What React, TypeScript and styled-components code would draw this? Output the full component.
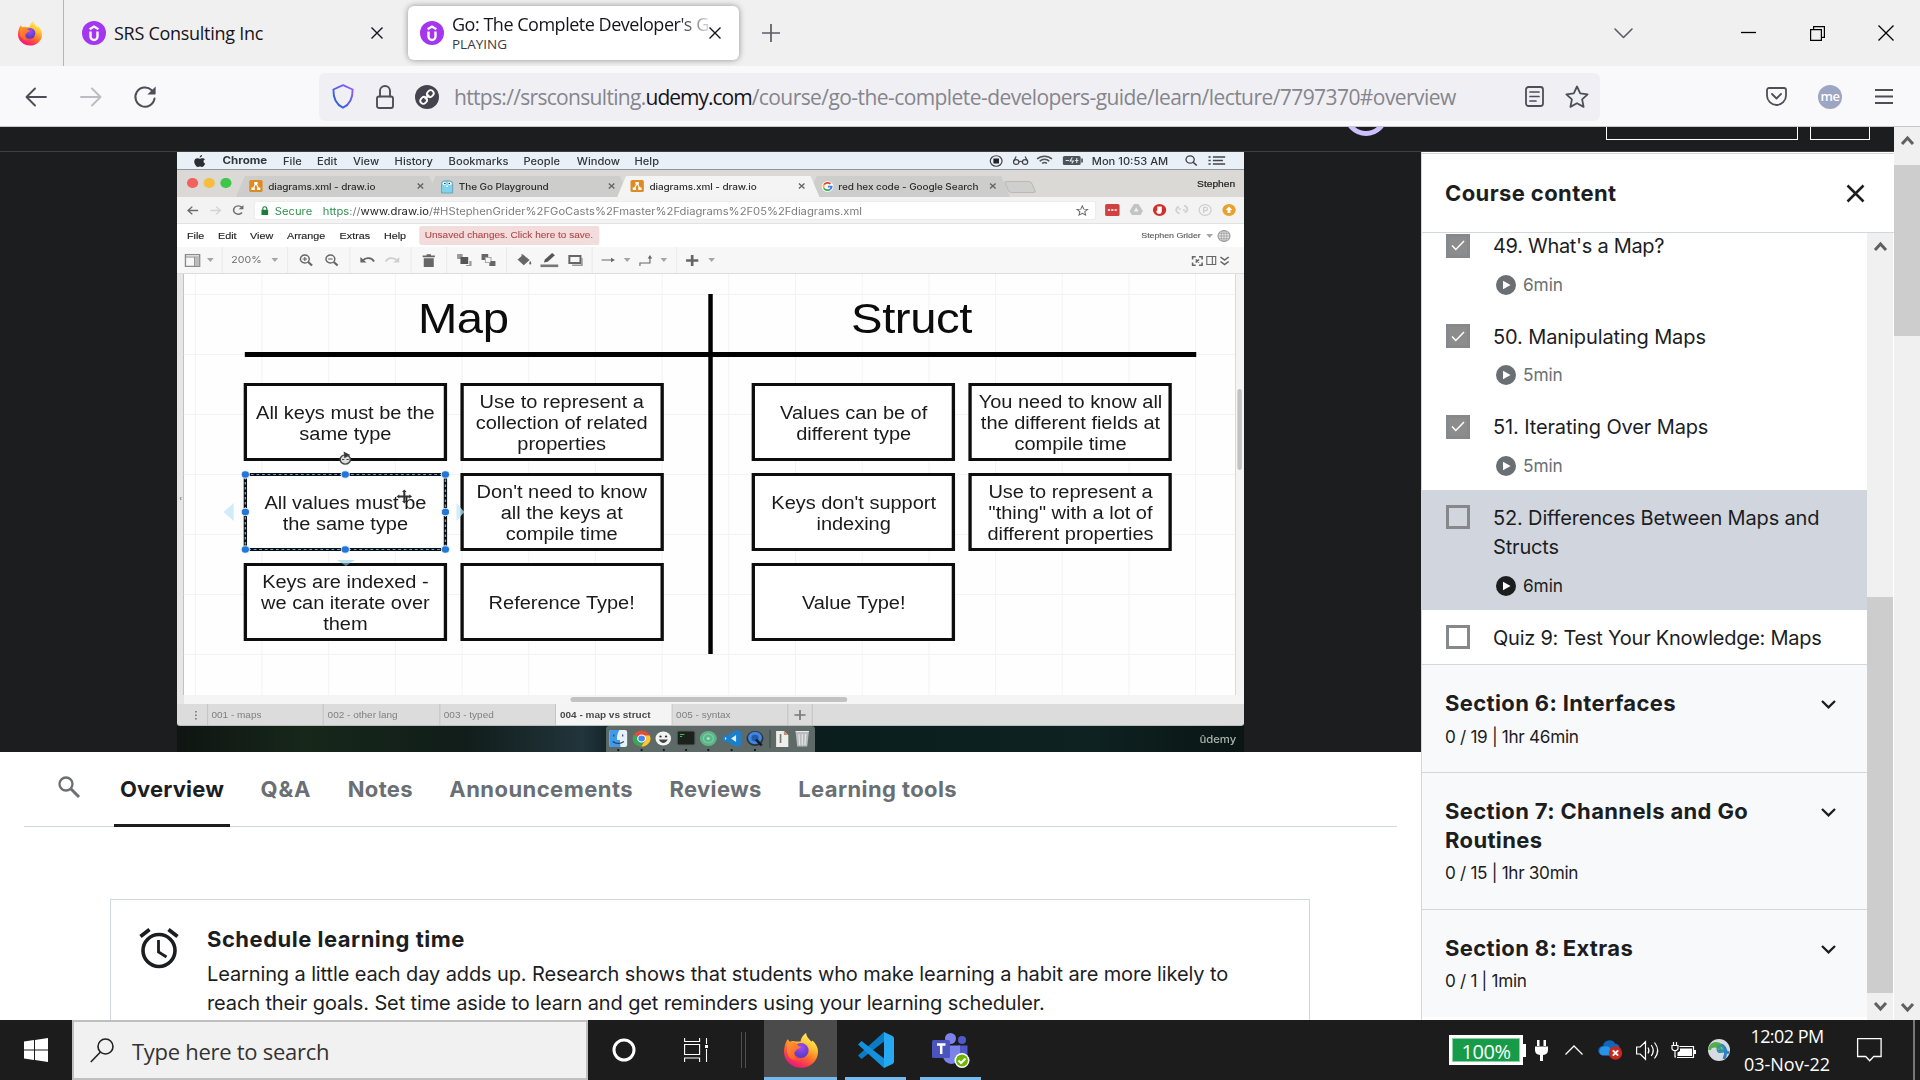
import React from 'react';
import styled, { createGlobalStyle, css } from 'styled-components';

const ui = '"Open Sans", "Noto Sans", sans-serif';
const site = 'Inter, "Liberation Sans", sans-serif';
const helv = '"Liberation Sans", Arial, sans-serif';

const GlobalStyle = createGlobalStyle`
  * { box-sizing: border-box; }
  body { margin: 0; background: #fff; overflow: hidden; }
  svg { display: block; flex: none; overflow: visible; }
`;

const Screen = styled.div`
  width: 1920px;
  height: 1080px;
  display: flex;
  flex-direction: column;
  overflow: hidden;
  font-family: ${ui};
  color: #15141a;
`;

/* ---------- Browser chrome ---------- */

const TabStrip = styled.div`
  height: 66px;
  flex: none;
  display: flex;
  align-items: stretch;
  background: #f0f0f0;
`;

const PinnedTab = styled.div`
  width: 64px;
  display: flex;
  align-items: center;
  padding-left: 18px;
  border-right: 1px solid #b5b5b8;
`;

const BrowserTab = styled.div<{ $active?: boolean }>`
  display: flex;
  align-items: center;
  width: ${p => (p.$active ? 331 : 329)}px;
  padding: 0 ${p => (p.$active ? 18 : 10)}px 0 ${p => (p.$active ? 12 : 18)}px;
  ${p =>
    p.$active &&
    css`
      height: 54px;
      margin: 6px 0 0 15px;
      border-radius: 6px;
      background: #fff;
      box-shadow: 0 0 6px rgba(0, 0, 0, 0.4);
    `}
`;

const TabLabels = styled.div`
  flex: 1;
  min-width: 0;
  margin-left: 8px;
  white-space: nowrap;
`;

const TabTitle = styled.div<{ $fade?: boolean }>`
  font-size: 18px;
  line-height: 22px;
  letter-spacing: ${p => (p.$fade ? -0.48 : -0.28)}px;
  ${p => p.$fade && 'mask-image: linear-gradient(to right, #000 88%, transparent 102%);'}
`;

const TabState = styled.div`
  font-size: 13.5px;
  line-height: 19px;
  color: #3b3a43;
`;

const NewTab = styled.div`
  display: flex;
  align-items: center;
  margin-left: 23px;
`;

const WindowButtons = styled.div`
  display: flex;
  align-items: center;
  margin-left: auto;
  padding-right: 26px;
`;

const Spacer = styled.div<{ $w: number }>`
  flex: none;
  width: ${p => p.$w}px;
`;

const NavBar = styled.div`
  height: 61px;
  flex: none;
  display: flex;
  align-items: center;
  padding: 1px 27px 0 25px;
  background: #f9f9fb;
  border-bottom: 1px solid #c8c8cc;
`;

const UrlBar = styled.div`
  display: flex;
  align-items: center;
  width: 1281px;
  height: 48px;
  margin-left: 162px;
  padding: 0 11px 0 13px;
  border-radius: 6px;
  background: #f0f0f4;
`;

const Url = styled.div`
  flex: 1;
  margin-left: 15px;
  padding-top: 1px;
  font-size: 21px;
  line-height: 28px;
  letter-spacing: -0.57px;
  color: #85858c;
  white-space: pre;
`;

const UrlOrigin = styled.span`
  letter-spacing: -0.68px;
`;

const UrlHost = styled.span`
  letter-spacing: -1.01px;
  color: #15141a;
`;

const Avatar = styled.div`
  width: 24px;
  height: 24px;
  margin-left: 31px;
  border-radius: 50%;
  background: #9ea5c2;
  color: #fff;
  font: 600 13px/22px ${ui};
  letter-spacing: -0.5px;
  text-align: center;
`;

/* ---------- Page ---------- */

const Page = styled.div`
  flex: 1;
  min-height: 0;
  display: flex;
`;

const PageBody = styled.div`
  width: 1894px;
  display: flex;
  flex-direction: column;
`;

const SiteHeader = styled.div`
  height: 25px;
  flex: none;
  display: flex;
  align-items: flex-start;
  justify-content: flex-end;
  padding-right: 24px;
  background: #1c1d1f;
  border-bottom: 1px solid #3e4143;
`;

const ProgressClip = styled.div`
  height: 9px;
  margin-right: 206px;
  overflow: hidden;
  display: flex;
  align-items: flex-end;
`;

const ProgressRing = styled.div`
  flex: none;
  width: 44px;
  height: 44px;
  border: 5px solid #cec0fc;
  border-radius: 50%;
`;

const OutlineButton = styled.div<{ $w: number }>`
  width: ${p => p.$w}px;
  height: 13px;
  margin-left: 12px;
  border: 1px solid #fff;
  border-top: 0;
`;

const Columns = styled.div`
  flex: 1;
  min-height: 0;
  display: flex;
`;

const MainColumn = styled.div`
  width: 1421px;
  display: flex;
  flex-direction: column;
  overflow: hidden;
  background: #fff;
`;

const Player = styled.div`
  height: 600px;
  flex: none;
  padding-left: 177px;
  background: #1c1d1f;
`;

/* A 16:10 recording shown in a 16:9 player, so it is stretched sideways */
const Recording = styled.div`
  width: 960px;
  height: 600px;
  display: flex;
  flex-direction: column;
  overflow: hidden;
  transform: scaleX(1.1115);
  transform-origin: 0 0;
  filter: blur(0.5px);
  font-family: ${site};
  background: #10201d;
`;

const MacMenu = styled.div`
  height: 17px;
  flex: none;
  display: flex;
  align-items: center;
  padding: 0 17px 0 15px;
  background: #e9f0f8;
  font-size: 10px;
  font-weight: 500;
  color: #33363b;
  white-space: nowrap;
`;

const MacMenuItem = styled.div<{ $w: number; $bold?: boolean }>`
  width: ${p => p.$w}px;
  ${p => p.$bold && 'font-weight: 700; font-size: 10.4px;'}
`;

const ChromeTabs = styled.div`
  height: 28px;
  flex: none;
  display: flex;
  align-items: flex-end;
  padding: 0 8px 0 9px;
  background: #dad9d6;
  border-top: 1px solid #8f9499;
`;

const Lights = styled.div`
  display: flex;
  gap: 5.5px;
  width: 44px;
  padding-bottom: 9px;
`;

const Light = styled.div<{ $c: string }>`
  width: 9.6px;
  height: 9.6px;
  border-radius: 50%;
  background: ${p => p.$c};
`;

const ChromeTab = styled.div<{ $active?: boolean }>`
  position: relative;
  z-index: ${p => (p.$active ? 2 : 1)};
  width: 182px;
  height: 21px;
  margin-right: -10.5px;
  padding: 0 13px 1px 12px;
  display: flex;
  align-items: center;
  gap: 5px;
  background: ${p => (p.$active ? '#f4f4f4' : '#cdcdcb')};
  clip-path: polygon(0 100%, 8px 0, 174px 0, 182px 100%);
  font-size: 9px;
  font-weight: 500;
  letter-spacing: -0.08px;
  color: #2d2d2d;
  white-space: nowrap;

  svg:last-child { margin-left: auto; }
`;

const GhostTab = styled.div`
  width: 25px;
  height: 12px;
  margin: 0 0 4px 7px;
  border: 1px solid #b9b9b6;
  background: #cfcfcd;
  border-radius: 3px;
  transform: skewX(22deg);
`;

const ChromeUser = styled.div`
  margin-left: auto;
  padding-bottom: 7px;
  font: 500 9.2px/12px ${helv};
  color: #222;
  -webkit-text-stroke: 0.2px #222;
`;

const ChromeNav = styled.div`
  height: 27px;
  flex: none;
  display: flex;
  align-items: center;
  padding: 0 7px 0 9px;
  background: #f3f3f3;
  border-bottom: 1px solid #e2e2e2;
`;

const ChromeField = styled.div`
  width: 758px;
  height: 19px;
  margin: 0 8px 0 9px;
  padding: 1px 6px 0 6px;
  display: flex;
  align-items: center;
  background: #fff;
  border: 1px solid #ececec;
  border-radius: 3px;
  font-size: 10.1px;
  color: #7d7d7d;
  white-space: nowrap;

  svg:last-child { margin-left: auto; }
`;

const Ink = styled.span<{ $c: string }>`
  color: ${p => p.$c};
`;

const Extensions = styled.div`
  flex: 1;
  display: flex;
  justify-content: space-between;
`;

const DrawMenu = styled.div`
  height: 23px;
  flex: none;
  display: flex;
  align-items: center;
  padding: 0 12px 0 9px;
  background: #fff;
  font: 9.7px/12px ${helv};
  color: #1f1f1f;
  -webkit-text-stroke: 0.15px #1f1f1f;
`;

const DrawMenuItem = styled.div<{ $w: number }>`
  width: ${p => p.$w}px;
`;

const Unsaved = styled.div`
  width: 162px;
  height: 19px;
  margin-left: 1.5px;
  border-radius: 2px;
  background: #f3dcdc;
  color: #b04a4a;
  -webkit-text-stroke: 0.1px #b04a4a;
  font-size: 9px;
  line-height: 18px;
  letter-spacing: 0.01px;
  text-align: center;
  white-space: nowrap;
`;

const DrawUser = styled.div`
  margin-left: auto;
  padding-top: 1px;
  display: flex;
  align-items: center;
  gap: 4.5px;
  font-size: 8px;
  letter-spacing: -0.06px;
  color: #555;
  -webkit-text-stroke: 0.1px #555;
`;

const ToolRow = styled.div`
  height: 27px;
  flex: none;
  display: flex;
  background: #f7f7f7;
  border-bottom: 1px solid #dcdcdc;
`;

const ToolGroup = styled.div<{ $w: number; $last?: boolean }>`
  width: ${p => p.$w}px;
  display: flex;
  align-items: center;
  justify-content: space-evenly;
  border-right: ${p => (p.$last ? 0 : '1px solid #ebebeb')};
  font: 9.6px/12px ${site};
  color: #6f6f6f;
`;

const ToolEnd = styled.div`
  display: flex;
  align-items: center;
  gap: 3px;
  margin-left: auto;
  padding: 1px 13px 0 0;
`;

const DrawBody = styled.div`
  height: 421px;
  flex: none;
  display: flex;
`;

const SideRail = styled.div`
  width: 6px;
  background: #e6e6e6;
  display: flex;
  align-items: center;
  font: bold 8px/8px ${helv};
  color: #8a8a8a;
  padding: 28px 0 0 2px;
`;

const Canvas = styled.div`
  position: relative;
  width: 946px;
  background-color: #fefefe;
  background-image: linear-gradient(to right, #f3f3f3 1px, transparent 1px),
    linear-gradient(to bottom, #f3f3f3 1px, transparent 1px);
  background-size: 60px 60px;
  background-position: 10px 20px;
  font-family: ${helv};
`;

const Heading = styled.div<{ $x: number }>`
  position: absolute;
  left: ${p => p.$x}px;
  top: 21px;
  width: 200px;
  font-size: 42.5px;
  line-height: 48px;
  letter-spacing: -0.4px;
  text-align: center;
  color: #0c0c0c;
`;

const Rule = styled.div<{ $x: number; $y: number; $w: number; $h: number }>`
  position: absolute;
  left: ${p => p.$x}px;
  top: ${p => p.$y}px;
  width: ${p => p.$w}px;
  height: ${p => p.$h}px;
  background: #000;
`;

const Node = styled.div<{ $x: number; $y: number }>`
  position: absolute;
  left: ${p => p.$x}px;
  top: ${p => p.$y}px;
  width: 183px;
  height: 78px;
  padding-top: 3.5px;
  display: flex;
  align-items: center;
  justify-content: center;
  border: 3px solid #0d0d0d;
  background: #fff;
  font-size: 18px;
  line-height: 21.2px;
  letter-spacing: -0.02px;
  text-align: center;
  white-space: pre-line;
  color: #1b1b1b;
`;

const Selection = styled.svg`
  position: absolute;
  left: 0;
  top: 0;
`;

const DrawScroll = styled.div`
  width: 8px;
  padding: 115px 1.5px 0 2px;
  background: #f4f4f4;
`;

const Thumb = styled.div<{ $w: number; $h: number }>`
  width: ${p => p.$w}px;
  height: ${p => p.$h}px;
  border-radius: 3px;
  background: #c2c2c2;
`;

const DrawScrollX = styled.div`
  height: 9px;
  flex: none;
  padding: 2px 0 0 353.5px;
  background: linear-gradient(to right, #e6e6e6 6px, #f5f5f5 6px);
`;

const Sheets = styled.div`
  height: 22px;
  flex: none;
  display: flex;
  align-items: stretch;
  padding-left: 6.5px;
  background: #dcdcdc;
  border-bottom: 1px solid #bdbdbd;
  border-radius: 0 0 3px 3px;
`;

const Sheet = styled.div<{ $w: number; $active?: boolean }>`
  width: ${p => p.$w}px;
  padding: 1px 0 0 3.5px;
  border-right: 1px solid #c6c6c6;
  font: ${p => (p.$active ? 'bold ' : '')}9px/21px ${helv};
  color: ${p => (p.$active ? '#4a4a4a' : '#808080')};
  background: ${p => (p.$active ? '#f4f4f4' : 'transparent')};
  display: flex;
  align-items: center;
  white-space: nowrap;
`;

const Desktop = styled.div`
  flex: 1;
  display: flex;
  align-items: flex-start;
  background: linear-gradient(to right, #0f1512 0, #17271a 12%, #101d1a 27%, #22343c 38%, #0c1c1c 42%, #0a1f1e 70%, #0e2321 85%, #0a1514 100%);
`;

const Dock = styled.div`
  width: 188px;
  height: 27px;
  margin-left: 386px;
  padding: 3.5px 5px 0 3px;
  display: flex;
  justify-content: space-between;
  background: #5d6a68;
  border-radius: 3px 3px 0 0;
`;

const DockApp = styled.div<{ $running?: boolean }>`
  display: flex;
  flex-direction: column;
  align-items: center;
  gap: 2px;

  &::after {
    content: '';
    width: 2px;
    height: 2px;
    border-radius: 50%;
    background: ${p => (p.$running ? '#0b0f0e' : 'transparent')};
  }
`;

const DockLine = styled.div`
  width: 1px;
  height: 18px;
  background: #3f4a48;
`;

const Watermark = styled.div`
  margin: 6px 7px 0 auto;
  font: 500 10.2px/14px ${site};
  color: #a9b2b1;
`;

/* ---------- Below the player ---------- */

const CourseTabs = styled.div`
  height: 75px;
  flex: none;
  display: flex;
  gap: 24.4px;
  margin: 0 24px;
  padding-left: 34px;
  border-bottom: 1px solid #d1d7dc;
`;

const SearchTab = styled.div`
  display: flex;
  align-items: center;
  width: 31.6px;
  padding-bottom: 4px;
`;

const CourseTab = styled.div<{ $ls: number; $active?: boolean }>`
  height: 75px;
  padding: 0 6px;
  font: 700 22px/74px ${site};
  letter-spacing: ${p => p.$ls}px;
  color: ${p => (p.$active ? '#1c1d1f' : '#6a6f73')};
  border-bottom: ${p => (p.$active ? '3px solid #1c1d1f' : '0')};
  white-space: nowrap;
`;

const ScheduleCard = styled.div`
  display: flex;
  align-items: flex-start;
  width: 1200px;
  height: 200px;
  flex: none;
  margin: 72px 0 0 110px;
  padding: 25px 28px;
  border: 1px solid #d1d7dc;
  font-family: ${site};
  color: #1c1d1f;

  > svg { margin-top: 3px; }
`;

const ScheduleText = styled.div`
  margin-left: 28px;
`;

const ScheduleTitle = styled.div`
  font-size: 22px;
  font-weight: 700;
  line-height: 28.8px;
  letter-spacing: 0.5px;
`;

const ScheduleCopy = styled.div`
  margin-top: 6px;
  font-size: 20px;
  line-height: 29.4px;
  letter-spacing: -0.12px;
  white-space: pre;
`;

/* ---------- Sidebar ---------- */

const Sidebar = styled.div`
  width: 473px;
  display: flex;
  flex-direction: column;
  padding-top: 1px;
  border-left: 1px solid #d1d7dc;
  background: #fff;
  font-family: ${site};
  color: #1c1d1f;
  overflow: hidden;
`;

const SidebarHead = styled.div`
  height: 80px;
  flex: none;
  display: flex;
  align-items: center;
  justify-content: space-between;
  padding: 0 30px 0 23px;
  border-top: 1px solid #d1d7dc;
  border-bottom: 1px solid #d1d7dc;
  font-size: 22px;
  font-weight: 700;
  letter-spacing: 0.4px;
`;

const SidebarScroll = styled.div`
  flex: 1;
  min-height: 0;
  display: flex;
`;

const LectureList = styled.div`
  width: 445px;
  overflow: hidden;

  > div:first-child { margin-top: -14.4px; }
`;

const Lecture = styled.div<{ $current?: boolean }>`
  display: flex;
  gap: 23px;
  padding: 13.4px 24px 0;
  background: ${p => (p.$current ? '#d1d5dd' : '#fff')};
`;

const CheckBox = styled.div<{ $done?: boolean }>`
  width: 24px;
  height: 24px;
  flex: none;
  margin-top: 1.5px;
  display: flex;
  align-items: center;
  justify-content: center;
  border: 3px solid #86898c;
  background: ${p => (p.$done ? '#8c8c8c' : 'transparent')};
`;

const LectureTitle = styled.div<{ $ls?: number }>`
  font-size: 20px;
  line-height: 29.4px;
  letter-spacing: ${p => p.$ls ?? -0.16}px;
  white-space: pre-line;
`;

const LectureMeta = styled.div<{ $current?: boolean }>`
  height: 20px;
  margin: 13.3px 0 14.5px 3px;
  display: flex;
  align-items: center;
  gap: 7px;
  font-size: 17.3px;
  line-height: 20px;
  letter-spacing: -0.1px;
  color: ${p => (p.$current ? '#1c1d1f' : '#6a6f73')};
`;

const QuizGap = styled.div`
  height: 11.3px;
`;

const Section = styled.div`
  padding: 24px 31px 23.7px 23px;
  border-top: 1px solid #d1d7dc;
  background: #f8f9fb;
`;

const SectionHead = styled.div`
  display: flex;
  justify-content: space-between;
  font-size: 22px;
  font-weight: 700;
  line-height: 28.8px;
  letter-spacing: 0.36px;
  white-space: pre-line;

  svg { margin-top: 11px; }
`;

const SectionMeta = styled.div`
  margin-top: 5.3px;
  font-size: 17.2px;
  line-height: 25px;
  letter-spacing: -0.32px;
`;

const ScrollTrack = styled.div`
  width: 26px;
  flex: none;
  display: flex;
  flex-direction: column;
  align-items: center;
  background: #f0f0f0;
`;

const ScrollArrow = styled.div<{ $h: number }>`
  height: ${p => p.$h}px;
  flex: none;
  display: flex;
  align-items: center;
`;

const ScrollThumb = styled.div<{ $h: number; $top?: number }>`
  width: 26px;
  height: ${p => p.$h}px;
  margin-top: ${p => p.$top ?? 0}px;
  background: #cdcdcd;
`;

const Grow = styled.div`
  flex: 1;
`;

/* ---------- Taskbar ---------- */

const Taskbar = styled.div`
  height: 60px;
  flex: none;
  display: flex;
  align-items: stretch;
  background: #1c1c1c;
`;

const StartButton = styled.div`
  width: 72px;
  display: flex;
  align-items: center;
  justify-content: center;
`;

const SearchBox = styled.div`
  width: 516px;
  display: flex;
  align-items: center;
  padding: 1px 0 0 16px;
  gap: 18px;
  border: 2px solid #bfbfbf;
  background: #f1f1f1;
  font-size: 22px;
  letter-spacing: -0.28px;
  color: #333;
`;

const TaskIcon = styled.div<{ $w: number; $ml?: number; $bar?: boolean; $focus?: boolean }>`
  width: ${p => p.$w}px;
  margin-left: ${p => p.$ml ?? 0}px;
  display: flex;
  align-items: center;
  justify-content: center;
  border-bottom: ${p => (p.$bar ? '3px solid #76b9ed' : '0')};
  padding-top: ${p => (p.$bar ? 3 : 0)}px;
  background: ${p => (p.$focus ? '#4b4b4b' : 'transparent')};
`;

const Tray = styled.div`
  margin-left: auto;
  display: flex;
  align-items: center;
  color: #fff;
`;

const Battery = styled.div`
  width: 74px;
  height: 30px;
  border: 3px solid #fff;
  background: #169b48;
  box-shadow: inset 0 0 0 1px #8fd0a8;
  font-size: 20px;
  line-height: 27px;
  letter-spacing: -0.5px;
  text-align: center;
`;

const BatteryNub = styled.div`
  width: 3px;
  height: 13px;
  margin-right: 9px;
  background: #fff;
`;

const Clock = styled.div`
  width: 90px;
  margin: 0 25px 0 12px;
  font-size: 18px;
  line-height: 28px;
  text-align: center;
`;

const ClockTime = styled.div`
  letter-spacing: -0.55px;
`;

const ShowDesktop = styled.div`
  align-self: stretch;
  width: 7px;
  margin-left: 31px;
  border-left: 2px solid #777;
`;

/* ---------- Icons ---------- */

const Firefox = ({ s = 24, id }: { s?: number; id: string }) => (
  <svg width={s} height={s} viewBox="0 0 34 34">
    <defs>
      <linearGradient id={`${id}a`} x1="0.8" y1="0.05" x2="0.3" y2="1">
        <stop offset="0" stopColor="#fff36b" />
        <stop offset="0.3" stopColor="#ffc233" />
        <stop offset="0.55" stopColor="#ff7a26" />
        <stop offset="0.78" stopColor="#ff3a50" />
        <stop offset="1" stopColor="#e31587" />
      </linearGradient>
      <radialGradient id={`${id}b`} cx="0.5" cy="0.3" r="0.7">
        <stop offset="0" stopColor="#a04cf5" />
        <stop offset="1" stopColor="#4f3bc0" />
      </radialGradient>
      <linearGradient id={`${id}c`} x1="0" y1="0" x2="0.6" y2="1">
        <stop offset="0" stopColor="#ffa02e" />
        <stop offset="1" stopColor="#ff5a2e" />
      </linearGradient>
    </defs>
    <path fill={`url(#${id}a)`} d="M3.6 6C4 7.6 4.6 8.7 5.2 9.4 7 8 9.5 7.6 12 8.6h4.5C17 5 19 2 22 0c.5 3.600 2.500 5.400 5 8.200.6.6 1 .5 1.500-.6C32 11 34 14.500 34 18.600A17 16 0 0 1 0 19C0 14 1.600 9.300 3.600 6z" />
    <circle cx="17" cy="17.500" r="7.600" fill={`url(#${id}b)`} />
    <path fill={`url(#${id}c)`} d="M4 6.500c.8 1.500 2 2.500 3.500 3C10.500 9 13 10.300 14 12.500c1 .7 2.300.9 3 1.200-.4 1.500-3 2-4 2.800-.8.8-.8 1.800-2.500 2.500-1 5 2.500 7.500 6 7.800C10 29 3 25 3 18c0-4 .3-8 1-11.500z" />
  </svg>
);

const UdemyIcon = () => (
  <svg width={24} height={24} viewBox="0 0 24 24" fill="none">
    <circle cx="12" cy="12" r="12" fill="#a435f0" />
    <path d="M7.600 8.200 12 5.600l4.400 2.600" stroke="#fff" strokeWidth="2.200" />
    <path d="M8.500 10.500v5a3.500 3.500 0 0 0 7 0v-5" stroke="#fff" strokeWidth="2.400" />
  </svg>
);

const Cross = ({ s = 12, w = 1.4, c = '#15141a' }: { s?: number; w?: number; c?: string }) => (
  <svg width={s} height={s} viewBox={`0 0 ${s} ${s}`}>
    <path d={`M.5.5l${s - 1} ${s - 1}M${s - 0.5}.5L.5 ${s - 0.5}`} stroke={c} strokeWidth={w} />
  </svg>
);

const line = { fill: 'none', strokeLinecap: 'round' as const, strokeLinejoin: 'round' as const };

const Caret = () => (
  <svg width={6} height={4} viewBox="0 0 6 4"><path d="M0 0h6L3 4z" fill="#a5a5a5" /></svg>
);

const DrawIo = () => (
  <svg width={12} height={12} viewBox="0 0 12 12">
    <rect width="12" height="12" rx="1.500" fill="#e08a24" />
    <path d="M6 3.500 3.500 8.500M6 3.500l2.500 5" stroke="#fff" strokeWidth="1" />
    <path d="M4.500 2h3v2.500h-3zM2 7.500h3V10H2zM7 7.500h3V10H7z" fill="#fff" />
  </svg>
);

const Gopher = () => (
  <svg width={12} height={13} viewBox="0 0 12 13">
    <path d="M1 13V3.500C1 1 3 .8 6 .8s5 .2 5 2.700V13z" fill="#7fd3ee" stroke="#4d8ca3" strokeWidth=".6" />
    <circle cx="3.600" cy="3.500" r="1.700" fill="#fff" /><circle cx="8.400" cy="3.500" r="1.700" fill="#fff" />
    <circle cx="4" cy="3.500" r=".7" fill="#222" /><circle cx="8" cy="3.500" r=".7" fill="#222" />
    <path d="M5.200 5.500h1.600V7H5.200z" fill="#fff" />
  </svg>
);

const GoogleG = () => (
  <svg width={10.5} height={11} viewBox="0 0 12 12" fill="none" strokeWidth="2">
    <circle cx="6" cy="6" r="6" fill="#fff" />
    <path d="M9 3a4.200 4.200 0 0 0-6.600.8" stroke="#e2453c" />
    <path d="M2.400 3.800a4.200 4.200 0 0 0 0 4.400" stroke="#f5b912" />
    <path d="M2.400 8.200A4.200 4.200 0 0 0 8.800 9.200" stroke="#35a853" />
    <path d="M8.800 9.200A4.200 4.200 0 0 0 10.200 6.200H6.300" stroke="#4081ec" />
  </svg>
);

const TabCross = () => (
  <svg width={6} height={6} viewBox="0 0 6 6"><path d="M.5.5l5 5M5.500.5l-5 5" stroke="#666" strokeWidth="1.200" /></svg>
);

const Play = ({ c }: { c: string }) => (
  <svg width={20} height={20} viewBox="0 0 20 20">
    <circle cx="10" cy="10" r="10" fill={c} />
    <path d="M7 5.800v8.400l7.600-4.200z" fill="#fff" />
  </svg>
);

const Tick = () => (
  <svg width={14} height={11} viewBox="0 0 14 11"><path d="M1 5.500 4.800 9.500 13 1" fill="none" stroke="#fff" strokeWidth="1.500" /></svg>
);

const Chevron = () => (
  <svg width={15} height={9} viewBox="0 0 15 9"><path d="M1 1l6.500 6.300L14 1" fill="none" stroke="#1c1d1f" strokeWidth="2.300" /></svg>
);

const ScrollChevron = ({ up }: { up?: boolean }) => (
  <svg width={13} height={11} viewBox="0 0 13 11">
    <path d={up ? 'M1 9l5.500-6L12 9' : 'M1 2l5.500 6L12 2'} fill="none" stroke="#606060" strokeWidth="3" />
  </svg>
);

/* ---------- Data ---------- */

const nodes = [
  { x: 54, y: 109, text: 'All keys must be the\nsame type' },
  { x: 248.6, y: 109, text: 'Use to represent a\ncollection of related\nproperties' },
  { x: 54, y: 199, text: 'All values must be\nthe same type' },
  { x: 248.6, y: 199, text: "Don't need to know\nall the keys at\ncompile time" },
  { x: 54, y: 289, text: 'Keys are indexed -\nwe can iterate over\nthem' },
  { x: 248.6, y: 289, text: 'Reference Type!' },
  { x: 511.3, y: 109, text: 'Values can be of\ndifferent type' },
  { x: 706.4, y: 109, text: 'You need to know all\nthe different fields at\ncompile time' },
  { x: 511.3, y: 199, text: "Keys don't support\nindexing" },
  { x: 706.4, y: 199, text: 'Use to represent a\n"thing" with a lot of\ndifferent properties' },
  { x: 511.3, y: 289, text: 'Value Type!' },
];

const macMenu: [string, number][] = [
  ['File', 30.6], ['Edit', 32.3], ['View', 37.5], ['History', 48.6], ['Bookmarks', 67.4],
  ['People', 47.9], ['Window', 52], ['Help', 30],
];

const drawMenu: [string, number][] = [
  ['File', 27.9], ['Edit', 28.8], ['View', 33.3], ['Arrange', 47.3], ['Extras', 39.9], ['Help', 30],
];

const lectures = [
  { title: "49. What's a Map?", time: '6min', done: true, ls: -0.3 },
  { title: '50. Manipulating Maps', time: '5min', done: true, ls: -0.1 },
  { title: '51. Iterating Over Maps', time: '5min', done: true, ls: -0.13 },
  { title: '52. Differences Between Maps and\nStructs', time: '6min', current: true },
  { title: 'Quiz 9: Test Your Knowledge: Maps', ls: -0.24 },
];

const sections = [
  { title: 'Section 6: Interfaces', meta: '0 / 19 | 1hr 46min' },
  { title: 'Section 7: Channels and Go\nRoutines', meta: '0 / 15 | 1hr 30min' },
  { title: 'Section 8: Extras', meta: '0 / 1 | 1min' },
];

/* ---------- Parts ---------- */

function Browser() {
  return (
    <>
      <TabStrip>
        <PinnedTab><Firefox id="ffTab" s={24} /></PinnedTab>
        <BrowserTab>
          <UdemyIcon />
          <TabLabels><TabTitle>SRS Consulting Inc</TabTitle></TabLabels>
          <Cross s={12} />
        </BrowserTab>
        <BrowserTab $active>
          <UdemyIcon />
          <TabLabels>
            <TabTitle $fade>Go: The Complete Developer's G</TabTitle>
            <TabState>PLAYING</TabState>
          </TabLabels>
          <Cross s={12} />
        </BrowserTab>
        <NewTab>
          <svg width={18} height={18} viewBox="0 0 18 18"><path d="M9 0v18M0 9h18" stroke="#5b5b66" strokeWidth="1.700" /></svg>
        </NewTab>
        <WindowButtons>
          <svg width={19} height={11} viewBox="0 0 19 11"><path d="M1 1l8.500 8.500L18 1" stroke="#5b5b66" strokeWidth="1.600" {...line} /></svg>
          <Spacer $w={108} />
          <svg width={15} height={2} viewBox="0 0 15 2"><path d="M0 .5h15" stroke="#000" strokeWidth="1.300" /></svg>
          <Spacer $w={54} />
          <svg width={15} height={15} viewBox="0 0 15 15" fill="none" stroke="#000" strokeWidth="1.200">
            <path d="M.6 3.600h10.800v10.800H.6zM3.600 3.600V.6h10.800v10.800h-3" />
          </svg>
          <Spacer $w={53} />
          <Cross s={16} w={1.3} c="#000" />
        </WindowButtons>
      </TabStrip>
      <NavBar>
        <svg width={22} height={20} viewBox="0 0 22 20"><path d="M21 10H2M10 1.500 1.500 10l8.500 8.500" stroke="#4e4e59" strokeWidth="1.900" {...line} /></svg>
        <Spacer $w={33} />
        <svg width={22} height={20} viewBox="0 0 22 20"><path d="M1 10h19M12 1.500l8.500 8.500-8.500 8.500" stroke="#bcbcc2" strokeWidth="1.900" {...line} /></svg>
        <Spacer $w={32} />
        <svg width={23} height={22} viewBox="0 0 23 22">
          <path d="M20.500 12.500A9.600 9.600 0 1 1 17.500 4" stroke="#4e4e59" strokeWidth="2" {...line} />
          <path d="M21.600.4v7.400c0 .5-.3.8-.8.800h-7.400z" fill="#4e4e59" />
        </svg>
        <UrlBar>
          <svg width={22} height={25} viewBox="0 0 22 25">
            <defs>
              <linearGradient id="shield" x1="0.1" y1="0.8" x2="0.9" y2="0.1">
                <stop offset="0" stopColor="#2b62d9" /><stop offset="1" stopColor="#9059ff" />
              </linearGradient>
            </defs>
            <path d="M11 1.200 20.600 5.500c.2 8-2.600 15-9.600 18.200C4 20.500 1.200 13.500 1.400 5.500z" stroke="url(#shield)" strokeWidth="1.900" {...line} />
          </svg>
          <Spacer $w={22} />
          <svg width={18} height={24} viewBox="0 0 18 24">
            <rect x="1" y="11.500" width="16" height="11.500" rx="2" stroke="#4e4e59" strokeWidth="1.900" fill="none" />
            <path d="M4 11.500V6a5 5 0 0 1 10 0v5.500" stroke="#4e4e59" strokeWidth="1.900" {...line} />
          </svg>
          <Spacer $w={21} />
          <svg width={24} height={24} viewBox="0 0 24 24">
            <circle cx="12" cy="12" r="12" fill="#45444e" />
            <g transform="rotate(-45 12 12)" stroke="#fff" strokeWidth="1.800" fill="none">
              <rect x="3.800" y="9" width="7" height="6" rx="3" /><rect x="13.200" y="9" width="7" height="6" rx="3" /><path d="M9 12h6" />
            </g>
          </svg>
          <Url>
            <UrlOrigin>https://srsconsulting.</UrlOrigin>
            <UrlHost>udemy.com</UrlHost>
            /course/go-the-complete-developers-guide/learn/lecture/7797370#overview
          </Url>
          <svg width={19} height={21} viewBox="0 0 19 21">
            <rect x="1" y="1" width="17" height="19" rx="2.500" stroke="#4e4e59" strokeWidth="1.800" fill="none" />
            <path d="M5 6h9M5 10.500h9M5 15h6" stroke="#4e4e59" strokeWidth="1.700" {...line} />
          </svg>
          <Spacer $w={21} />
          <svg width={24} height={24} viewBox="0 0 24 24">
            <path d="M12 1.500l3.200 6.900 7.400.9-5.500 5.100 1.500 7.500L12 18.200l-6.600 3.700 1.500-7.500-5.500-5.100 7.400-.9z" stroke="#4e4e59" strokeWidth="1.800" {...line} />
          </svg>
        </UrlBar>
        <Spacer $w={166} />
        <svg width={21} height={19} viewBox="0 0 21 19">
          <path d="M3 1h15a2 2 0 0 1 2 2v5.500a9.500 9.500 0 0 1-19 0V3a2 2 0 0 1 2-2z" stroke="#4e4e59" strokeWidth="1.800" {...line} />
          <path d="M6 7l4.500 4.500L15 7" stroke="#4e4e59" strokeWidth="1.800" {...line} />
        </svg>
        <Avatar>me</Avatar>
        <Spacer $w={33} />
        <svg width={18} height={15} viewBox="0 0 18 15"><path d="M0 1h18M0 7.500h18M0 14h18" stroke="#4e4e59" strokeWidth="1.900" /></svg>
      </NavBar>
    </>
  );
}

const g = '#666';

function DrawTools() {
  return (
    <ToolRow>
      <ToolGroup $w={40.5}>
        <svg width={14} height={13} viewBox="0 0 14 13"><path d="M.6.6h12.800v11.800H.6zM.6 3h12.800M9 3v9.400" fill="none" stroke="#8a8a8a" strokeWidth="1.200" /><path d="M9.500 3h3.500v9H9.500z" fill="#bbb" /></svg>
        <Caret />
      </ToolGroup>
      <ToolGroup $w={59.5}>200%<Caret /></ToolGroup>
      <ToolGroup $w={56}>
        <svg width={12} height={12} viewBox="0 0 12 12" fill="none" stroke={g}><circle cx="5" cy="5" r="4" strokeWidth="1.300" /><path d="M8 8l3.500 3.500" strokeWidth="1.900" /><path d="M3 5h4M5 3v4" strokeWidth="1.100" /></svg>
        <svg width={12} height={12} viewBox="0 0 12 12" fill="none" stroke={g}><circle cx="5" cy="5" r="4" strokeWidth="1.300" /><path d="M8 8l3.500 3.500" strokeWidth="1.900" /><path d="M3 5h4" strokeWidth="1.100" /></svg>
      </ToolGroup>
      <ToolGroup $w={54.5}>
        <svg width={13} height={8} viewBox="0 0 13 8"><path d="M2 4.500C5 1 10 1.500 12.300 5.500" fill="none" stroke={g} strokeWidth="1.700" /><path d="M0 1v5.500h5.500z" fill={g} /></svg>
        <svg width={13} height={8} viewBox="0 0 13 8"><path d="M11 4.500C8 1 3 1.500.7 5.500" fill="none" stroke="#cfcfcf" strokeWidth="1.700" /><path d="M13 1v5.500H7.500z" fill="#cfcfcf" /></svg>
      </ToolGroup>
      <ToolGroup $w={32}>
        <svg width={11} height={13} viewBox="0 0 11 13"><path d="M0 1.500h3.500V.3h4v1.200H11v1.800H0zM1 4.300h9V13H1z" fill={g} /></svg>
      </ToolGroup>
      <ToolGroup $w={54.5}>
        <svg width={13} height={12} viewBox="0 0 13 12"><path d="M0 0h5v5H0z" fill="#999" /><path d="M3 3h7v7H3z" fill="#555" /><path d="M11 7h2v5H8v-1h3z" fill="#999" /></svg>
        <svg width={13} height={12} viewBox="0 0 13 12"><path d="M0 0h6v6H0z" fill="#666" /><path d="M3.500 3.500h5v5h-5z" fill="#f7f7f7" stroke="#aaa" /><path d="M8 7h4.500v5H7V9h1z" fill="#666" /></svg>
      </ToolGroup>
      <ToolGroup $w={77}>
        <svg width={13} height={12} viewBox="0 0 13 12"><path d="M4.500 0v4M1 5.500 5.500 1.500 10.500 6 6 10.500z" fill={g} stroke={g} /><path d="M11.800 7c1.500 2.500.9 3.500 0 3.500s-1.500-1 0-3.500z" fill={g} /></svg>
        <svg width={16} height={15} viewBox="0 0 16 15"><path d="M3 9.500 4 6.500 10.500 0 13 2.300 6.500 8.800z" fill="#555" /><path d="M0 11.500h16v2.600H0z" fill="#777" /></svg>
        <svg width={13} height={11} viewBox="0 0 13 11"><path d="M1 1h10v7H1z" fill="none" stroke={g} strokeWidth="1.800" /><path d="M13 3v8H3.500V9.500h8V3z" fill="#999" /></svg>
      </ToolGroup>
      <ToolGroup $w={76}>
        <svg width={12} height={6} viewBox="0 0 12 6"><path d="M0 3h9" stroke={g} /><path d="M8.500.8v4.400L12 3z" fill={g} /></svg>
        <Caret />
        <svg width={12} height={11} viewBox="0 0 12 11"><path d="M1.500 11V8H10.500V2" fill="none" stroke={g} /><path d="M8.500 3.500h4L10.500 0z" fill={g} /></svg>
        <Caret />
      </ToolGroup>
      <ToolGroup $w={42} $last>
        <svg width={11} height={11} viewBox="0 0 11 11"><path d="M5.500 0v11M0 5.500h11" stroke={g} strokeWidth="2.400" /></svg>
        <Caret />
      </ToolGroup>
      <ToolEnd>
        <svg width={10} height={10} viewBox="0 0 10 10" fill="none" stroke={g} strokeWidth="1.400"><path d="M.7 3.500V.7h2.800M6.500.7h2.800v2.800M9.300 6.500v2.800H6.500M3.500 9.300H.7V6.500M3.500 3.500l3 3M6.500 3.500l-3 3" /></svg>
        <svg width={9} height={9} viewBox="0 0 9 9" fill="none" stroke={g}><path d="M.5.500h8v8h-8zM5.500.5v8" /></svg>
        <svg width={9} height={10} viewBox="0 0 9 10" fill="none" stroke={g} strokeWidth="1.500"><path d="M.8 1l3.700 3L8.200 1M.8 5.500l3.700 3 3.700-3" /></svg>
      </ToolEnd>
    </ToolRow>
  );
}

function Diagram() {
  const handles = [[55.5, 200.5], [145.4, 200.5], [235.5, 200.5], [55.5, 238], [235.5, 238], [55.5, 275.5], [145.4, 275.5], [235.5, 275.5]];
  return (
    <DrawBody>
      <SideRail>‹</SideRail>
      <Canvas>
        <Heading $x={151.5}>Map</Heading>
        <Heading $x={554.8}>Struct</Heading>
        <Rule $x={55} $y={78} $w={855.5} $h={5} />
        <Rule $x={471.6} $y={20} $w={4.6} $h={360} />
        {nodes.map(n => (
          <Node key={n.text} $x={n.x} $y={n.y}>{n.text}</Node>
        ))}
        <Selection width={946} height={420} viewBox="0 0 946 420">
          <rect x="55.500" y="200.500" width="180" height="75" fill="none" stroke="#5aa9e6" strokeWidth="1.200" strokeDasharray="2.500 2.500" />
          {handles.map(([x, y]) => (
            <circle key={`${x}-${y}`} cx={x} cy={y} r="3.700" fill="#2277d8" stroke="#fff" strokeWidth=".8" />
          ))}
          <path d="M45 229v18l-9-9zM245.500 229v18l7-9z" fill="#bfe6f8" opacity=".75" />
          <path d="M138 286h16l-8 6z" fill="#8fcbe2" opacity=".6" />
          <circle cx="145.400" cy="185.500" r="4.600" fill="#ddd" stroke="#444" strokeWidth="1.300" />
          <path d="M144.500 178.500l4.500 2.500-4 2.500zM142.500 185.500h2M146.500 185.500h2" fill="#333" stroke="#444" />
          <path d="M198.500 217v11M193.500 222.500h10" stroke="#333" strokeWidth="1.800" />
          <path d="M198.500 215.500l-2 2.500h4zM198.500 229.500l-2-2.500h4zM191.500 222.500l2.500-2v4zM205.500 222.500l-2.500-2v4z" fill="#333" />
        </Selection>
      </Canvas>
      <DrawScroll><Thumb $w={4.3} $h={81} /></DrawScroll>
    </DrawBody>
  );
}

function MacDock() {
  return (
    <Dock>
      <DockApp $running><svg width={16} height={17} viewBox="0 0 16 17"><rect width="16" height="17" rx="2" fill="#e8f1fa" /><path d="M0 2a2 2 0 0 1 2-2h7c-2 4-2.500 7-2 10h2.500l.5 7H2a2 2 0 0 1-2-2z" fill="#3f9be8" /><path d="M4 4.500v2M12 4.500v2M3 11.500c3 2.500 7 2.500 10 0" stroke="#1f3d66" fill="none" /></svg></DockApp>
      <DockApp $running><svg width={16} height={17} viewBox="0 0 16 16"><circle cx="8" cy="8" r="8" fill="#e04b3c" /><path d="M1 4.200A8 8 0 0 0 7.500 16L11 9.500z" fill="#3aa757" /><path d="M15.400 5H8l3.300 5L7.700 16A8 8 0 0 0 15.400 5z" fill="#f8c930" /><circle cx="8" cy="8" r="3.500" fill="#4688ef" stroke="#fff" /></svg></DockApp>
      <DockApp $running><svg width={15} height={17} viewBox="0 0 15 16"><circle cx="7.500" cy="8" r="7" fill="#f4f4f4" /><circle cx="5" cy="6" r="1.100" fill="#333" /><circle cx="10" cy="6" r="1.100" fill="#333" /><path d="M3.500 9c2 4.500 6 4.500 8 0z" fill="#444" /></svg></DockApp>
      <DockApp $running><svg width={16} height={17} viewBox="0 0 16 17"><rect y="1" width="16" height="14" rx="1.500" fill="#1d211d" stroke="#565e58" /><path d="M2.500 4.500h4M2.500 6.500h2" stroke="#3bbf4c" /></svg></DockApp>
      <DockApp $running><svg width={16} height={17} viewBox="0 0 16 16"><circle cx="8" cy="8" r="7.600" fill="#5db58a" /><circle cx="8" cy="8" r="4.500" fill="none" stroke="#7fd0a6" /><circle cx="8" cy="8" r="1.200" fill="#b8f0d3" /></svg></DockApp>
      <DockApp $running><svg width={17} height={17} viewBox="0 0 17 17"><path d="M12 0l5 2v13l-5 2-9-6-2 1.500-1-1V5.500l1-1L3 6z" fill="#1d7fc9" /><path d="M12 5v7L7.500 8.500zM2 7v3l1.500-1.500z" fill="#dff0fb" /></svg></DockApp>
      <DockApp $running><svg width={16} height={17} viewBox="0 0 16 16"><circle cx="8" cy="8" r="7.600" fill="#2a3240" /><circle cx="8" cy="7.500" r="4.700" fill="#2458a8" stroke="#3f87e0" strokeWidth="3" /><path d="M9 9l5 6" stroke="#171c25" strokeWidth="2.600" /></svg></DockApp>
      <DockLine />
      <DockApp><svg width={13} height={17} viewBox="0 0 13 17"><path d="M1 1h7l4 4v12H1z" fill="#efefe9" /><path d="M5 4v9" stroke="#777" strokeWidth="1.500" /><path d="M8 1l4 4H8z" fill="#c88f6a" /></svg></DockApp>
      <DockApp><svg width={13} height={17} viewBox="0 0 13 17"><path d="M.5 1.500h12L11 16.500H2z" fill="#b9bdbc" /><path d="M.5 1.500h12M3.500 4l.6 11M6.500 4v11M9.500 4L9 15" stroke="#e6e8e8" fill="none" /></svg></DockApp>
    </Dock>
  );
}

function Video() {
  return (
    <Player>
      <Recording>
        <MacMenu>
          <svg width={11} height={12} viewBox="0 0 11 12"><path d="M7.600 0c.1 1.300-1 2.600-2.200 2.600C5.200 1.300 6.400.1 7.600 0zM10.400 8.600C9.900 10 8.800 12 7.700 12c-.8 0-1-.5-2-.5s-1.300.5-2 .5C2.300 12 .5 9 .5 6.600c0-2.200 1.400-3.400 2.800-3.400.9 0 1.700.6 2.200.6.600 0 1.500-.7 2.600-.6.8 0 1.600.4 2.100 1.100-2 1.200-1.600 3.600.2 4.300z" fill="#2b2d31" /></svg>
          <Spacer $w={15} />
          <MacMenuItem $w={54.4} $bold>Chrome</MacMenuItem>
          {macMenu.map(([t, w]) => <MacMenuItem key={t} $w={w}>{t}</MacMenuItem>)}
          <Grow />
          <svg width={12} height={12} viewBox="0 0 12 12"><circle cx="6" cy="6" r="5.300" fill="none" stroke="#444" strokeWidth="1.100" /><rect x="3.500" y="3.500" width="5" height="5" fill="#222" /></svg>
          <Spacer $w={9} />
          <svg width={14} height={9} viewBox="0 0 14 9" fill="none" stroke="#444" strokeWidth="1.100"><circle cx="3" cy="6" r="2.400" /><circle cx="11" cy="6" r="2.400" /><path d="M5.400 6q1.600-1.500 3.200 0M.8 5 3 .6M13.200 5 11 .6" /></svg>
          <Spacer $w={7} />
          <svg width={15} height={11} viewBox="0 0 15 11" fill="none" stroke="#555" strokeWidth="1.500"><path d="M.8 4C4.500.2 10.500.2 14.200 4M3.200 6.300c2.500-2.600 6.100-2.600 8.600 0M5.400 8.500c1.300-1.300 2.900-1.300 4.200 0" /></svg>
          <Spacer $w={9} />
          <svg width={18} height={9} viewBox="0 0 18 9"><rect width="16" height="9" rx="1.500" fill="#505358" /><path d="M16.500 2.500h1.500v4h-1.500z" fill="#505358" /><path d="M2.500 4.500h3M8.500 1.500 6.500 5h3L8 7.500M12.500 2v5M11 4.500h3" stroke="#dfe6ee" fill="none" /></svg>
          <Spacer $w={8} />
          <MacMenuItem $w={84}>Mon 10:53 AM</MacMenuItem>
          <svg width={11} height={11} viewBox="0 0 11 11" fill="none" stroke="#444"><circle cx="4.500" cy="4.500" r="3.700" strokeWidth="1.200" /><path d="M7.200 7.200l3.300 3.300" strokeWidth="1.500" /></svg>
          <Spacer $w={10} />
          <svg width={15} height={9} viewBox="0 0 15 9" stroke="#444" strokeWidth="1.500"><path d="M0 1h2M4 1h11M0 4.500h2M4 4.500h9M0 8h2M4 8h11" /></svg>
        </MacMenu>
        <ChromeTabs>
          <Lights><Light $c="#f0635c" /><Light $c="#f6bd3e" /><Light $c="#3cc64a" /></Lights>
          <ChromeTab><DrawIo />diagrams.xml - draw.io<TabCross /></ChromeTab>
          <ChromeTab><Gopher />The Go Playground<TabCross /></ChromeTab>
          <ChromeTab $active><DrawIo />diagrams.xml - draw.io<TabCross /></ChromeTab>
          <ChromeTab><GoogleG />red hex code - Google Search<TabCross /></ChromeTab>
          <GhostTab />
          <ChromeUser>Stephen</ChromeUser>
        </ChromeTabs>
        <ChromeNav>
          <svg width={10} height={9} viewBox="0 0 10 9"><path d="M10 4.500H1M4.800.6.9 4.500l3.900 3.900" fill="none" stroke="#6c6c6c" strokeWidth="1.300" /></svg>
          <Spacer $w={11} />
          <svg width={10} height={9} viewBox="0 0 10 9"><path d="M0 4.500h9M5.200.6l3.900 3.900-3.900 3.900" fill="none" stroke="#d4d4d4" strokeWidth="1.300" /></svg>
          <Spacer $w={10} />
          <svg width={10} height={10} viewBox="0 0 10 10"><path d="M8.500 7.500A4.200 4.200 0 1 1 8.200 2.200" fill="none" stroke="#6c6c6c" strokeWidth="1.400" /><path d="M9.800 0v4.300H5.500z" fill="#6c6c6c" /></svg>
          <ChromeField>
            <svg width={6} height={9} viewBox="0 0 6 9"><path d="M0 3.800h6V9H0z" fill="#1c7c3c" /><path d="M1.200 4V2.600a1.800 1.800 0 0 1 3.600 0V4" fill="none" stroke="#1c7c3c" /></svg>
            <Spacer $w={6} />
            <Ink $c="#2f9150">Secure</Ink>
            <Spacer $w={9.5} />
            <Ink $c="#2f9150">https</Ink>://<Ink $c="#222">www.draw.io</Ink>/#HStephenGrider%2FGoCasts%2Fmaster%2Fdiagrams%2F05%2Fdiagrams.xml
            <svg width={11} height={11} viewBox="0 0 24 24"><path d="M12 2l3 7 7.500.6-5.700 5 1.700 7.400L12 18l-6.500 4 1.700-7.400-5.700-5L9 9z" fill="none" stroke="#666" strokeWidth="2" /></svg>
          </ChromeField>
          <Extensions>
            <svg width={13} height={12} viewBox="0 0 13 12"><rect width="13" height="12" rx="1.500" fill="#d04141" /><path d="M2.500 6h8" stroke="#fff" strokeWidth="1.700" strokeDasharray="2 1" /></svg>
            <svg width={12} height={11} viewBox="0 0 12 11"><path d="M4 0h4l4 7-2 4H2L0 7z" fill="#c3c3c3" /><path d="M6 3.500 4 7.500h4z" fill="#f3f3f3" /></svg>
            <svg width={12} height={12} viewBox="0 0 12 12"><circle cx="6" cy="6" r="6" fill="#d0302c" /><path d="M4 9.500c-1.500-2-1-3 0-3V2.600h4V7c0 2-1 3-2 3z" fill="#fff" /></svg>
            <svg width={12} height={11} viewBox="0 0 12 11" fill="none" stroke="#cfcfcf" strokeWidth="1.500"><path d="M4 9.500C0 8 0 4 3.500 2.500M8 1.500c4 1.500 4 5.500.5 7M3 5h2M7 6h2" /></svg>
            <svg width={12} height={12} viewBox="0 0 12 12" fill="none" stroke="#cdcdcd" strokeWidth="1.100"><circle cx="6" cy="6" r="5.400" /><path d="M4.700 9V3.300h1.800a1.600 1.600 0 0 1 0 3.300H4.700" /></svg>
            <svg width={13} height={12} viewBox="0 0 12 12"><circle cx="6" cy="6" r="6" fill="#e9a02d" /><path d="M6 2.500 9 6H7.300v3H4.700V6H3z" fill="#fff" /></svg>
          </Extensions>
        </ChromeNav>
        <DrawMenu>
          {drawMenu.map(([t, w]) => <DrawMenuItem key={t} $w={w}>{t}</DrawMenuItem>)}
          <Unsaved>Unsaved changes. Click here to save.</Unsaved>
          <DrawUser>
            Stephen Grider
            <Caret />
            <svg width={12} height={12} viewBox="0 0 12 12" fill="none" stroke="#9a9a9a"><circle cx="6" cy="6" r="5.400" fill="#e6e6e6" /><path d="M.6 6h10.800M6 .6v10.800M1.500 3.300h9M1.500 8.700h9" strokeWidth=".7" /><ellipse cx="6" cy="6" rx="2.600" ry="5.400" strokeWidth=".7" /></svg>
          </DrawUser>
        </DrawMenu>
        <DrawTools />
        <Diagram />
        <DrawScrollX><Thumb $w={249} $h={5} /></DrawScrollX>
        <Sheets>
          <Sheet $w={21}>
            <svg width={12} height={11} viewBox="0 0 12 11"><path d="M7 1v9" stroke="#777" strokeWidth="1.500" strokeDasharray="1.500 2" /></svg>
          </Sheet>
          <Sheet $w={104.5}>001 - maps</Sheet>
          <Sheet $w={104.5}>002 - other lang</Sheet>
          <Sheet $w={104.5}>003 - typed</Sheet>
          <Sheet $w={104.5} $active>004 - map vs struct</Sheet>
          <Sheet $w={104}>005 - syntax</Sheet>
          <Sheet $w={22}>
            <svg width={13} height={10} viewBox="0 0 13 10"><path d="M7.500 0v10M2.500 5h10" stroke="#777" strokeWidth="1.500" /></svg>
          </Sheet>
        </Sheets>
        <Desktop>
          <MacDock />
          <Watermark>ûdemy</Watermark>
        </Desktop>
      </Recording>
    </Player>
  );
}

function CourseSidebar() {
  return (
    <Sidebar>
      <SidebarHead>
        Course content
        <Cross s={17} w={2.5} c="#1c1d1f" />
      </SidebarHead>
      <SidebarScroll>
        <LectureList>
          {lectures.map(l => (
            <Lecture key={l.title} $current={l.current}>
              <CheckBox $done={l.done}>{l.done && <Tick />}</CheckBox>
              <div>
                <LectureTitle $ls={l.ls}>{l.title}</LectureTitle>
                {l.time ? (
                  <LectureMeta $current={l.current}>
                    <Play c={l.current ? '#1c1d1f' : '#6a6f73'} />
                    {l.time}
                  </LectureMeta>
                ) : (
                  <QuizGap />
                )}
              </div>
            </Lecture>
          ))}
          {sections.map(s => (
            <Section key={s.title}>
              <SectionHead>{s.title}<Chevron /></SectionHead>
              <SectionMeta>{s.meta}</SectionMeta>
            </Section>
          ))}
        </LectureList>
        <ScrollTrack>
          <ScrollArrow $h={27}><ScrollChevron up /></ScrollArrow>
          <Grow />
          <ScrollThumb $h={396} />
          <ScrollArrow $h={27}><ScrollChevron /></ScrollArrow>
        </ScrollTrack>
      </SidebarScroll>
    </Sidebar>
  );
}

function VsCode() {
  return (
    <svg width={36} height={36} viewBox="0 0 36 36">
      <path d="M0 23.500 3.500 27 26 9.500V0z" fill="#0a7cc4" />
      <path d="M0 12.500 3.500 9 26 26.500V36z" fill="#1590dc" />
      <path d="M26 0l8.500 4Q36 4.800 36 6.500v23q0 1.700-1.500 2.500L26 36z" fill="#27a8f2" />
    </svg>
  );
}

function Teams() {
  return (
    <svg width={38} height={35} viewBox="0 0 38 35">
      <circle cx="30" cy="7" r="4" fill="#5059c9" />
      <path d="M26 12.500h9.500v9a6 6 0 0 1-9.500 4z" fill="#5059c9" />
      <circle cx="18.500" cy="5.500" r="5.500" fill="#7b83eb" />
      <path d="M11 12.500h17v10a8.500 8.500 0 0 1-17 0z" fill="#7b83eb" />
      <rect y="7" width="18" height="18" rx="1.500" fill="#4b53bc" />
      <path d="M5 11.500h8.500M9.200 11.500V21" stroke="#fff" strokeWidth="2.500" />
      <circle cx="30" cy="27.500" r="7.500" fill="#fff" />
      <circle cx="30" cy="27.500" r="6" fill="#6bb700" />
      <path d="M26.500 27.500l2.500 2.500 4.500-4.500" fill="none" stroke="#fff" strokeWidth="2.200" />
    </svg>
  );
}

function WindowsTaskbar() {
  return (
    <Taskbar>
      <StartButton>
        <svg width={24} height={24} viewBox="0 0 24 24" fill="#fff"><path d="M0 3.500 10 2v9.500H0zM11 1.900 24 0v11.500H11zM0 12.500h10V22L0 20.500zM11 12.500h13V24l-13-1.900z" /></svg>
      </StartButton>
      <SearchBox>
        <svg width={24} height={25} viewBox="0 0 24 25"><circle cx="15.500" cy="8.500" r="7.500" fill="none" stroke="#222" strokeWidth="1.600" /><path d="M10.500 14 .8 24" stroke="#222" strokeWidth="1.600" /></svg>
        Type here to search
      </SearchBox>
      <TaskIcon $w={72}>
        <svg width={24} height={24} viewBox="0 0 24 24"><circle cx="12" cy="12" r="10" fill="none" stroke="#fff" strokeWidth="3" /></svg>
      </TaskIcon>
      <TaskIcon $w={72}>
        <svg width={24} height={24} viewBox="0 0 24 24" fill="none" stroke="#fff" strokeWidth="1.100">
          <path d="M.6 6.500h15v10H.6zM.6 0v3.500h15V0M.6 24v-4h15v4M22.500 0v6M22.500 11v13" />
          <path d="M21 7h3v3h-3z" fill="#fff" stroke="none" />
        </svg>
      </TaskIcon>
      <TaskIcon $w={22}>
        <svg width={5} height={36} viewBox="0 0 5 36"><path d="M.5 0v36M4.500 0v36" stroke="#505050" /></svg>
      </TaskIcon>
      <TaskIcon $w={73} $ml={10} $bar $focus><Firefox id="ffTask" s={34} /></TaskIcon>
      <TaskIcon $w={61} $ml={8} $bar><VsCode /></TaskIcon>
      <TaskIcon $w={61} $ml={14} $bar><Teams /></TaskIcon>
      <Tray>
        <Battery>100%</Battery>
        <BatteryNub />
        <svg width={13} height={21} viewBox="0 0 13 21" fill="#fff"><path d="M2 0h2.500v6H2zM8.500 0H11v6H8.500zM0 6.500h13V10a5.500 5 0 0 1-5 5v6H5v-6a5.500 5 0 0 1-5-5z" /></svg>
        <Spacer $w={17} />
        <svg width={18} height={10} viewBox="0 0 18 10"><path d="M.5 9.500 9 1l8.500 8.500" fill="none" stroke="#fff" strokeWidth="1.300" /></svg>
        <Spacer $w={15} />
        <svg width={25} height={20} viewBox="0 0 25 20">
          <path d="M4.500 15A4.500 4.500 0 0 1 5 6a6.500 6.500 0 0 1 12-2.500 5.500 5.500 0 0 1 5 6L12 15z" fill="#1066bd" />
          <path d="M4.500 15.500A4.700 4.700 0 0 1 7 6.500c3-.8 5 1 6 3l4 6z" fill="#2794e6" />
          <circle cx="17.500" cy="13" r="6.700" fill="#c8281e" />
          <path d="M14.800 10.300l5.400 5.400M20.200 10.300l-5.400 5.400" stroke="#fff" strokeWidth="1.900" />
        </svg>
        <Spacer $w={13} />
        <svg width={23} height={19} viewBox="0 0 23 19" fill="none" stroke="#fff" strokeWidth="1.200"><path d="M.6 6h3.600L9.500.8v17.400L4.200 13H.6zM12 6.500c1.300 2 1.300 4 0 6M15.200 4c2.600 3.500 2.600 7.500 0 11M18.500 1.500c4 5 4 11 0 16" /></svg>
        <Spacer $w={12} />
        <svg width={25} height={17} viewBox="0 0 25 17" fill="none" stroke="#fff" strokeWidth="1.200"><path d="M1 3.500h6V7L5.500 8.500h-3L1 7zM2.500 0v3.500M5.500 0v3.500M4 8.500V15h1" /><path d="M8.500 4.500h14v11H6" /><path d="M9 6.500h12v7.500H6.500v-3.500L9 9z" fill="#fff" stroke="none" /><path d="M24 8v4" strokeWidth="2" /></svg>
        <Spacer $w={12} />
        <svg width={22} height={22} viewBox="0 0 22 22" fill="none">
          <circle cx="11" cy="11" r="11" fill="#d5dde3" />
          <path d="M1.500 11C3 4 9 2.500 14 7M3 8c4-2 8-1 10 3" stroke="#55ad4a" strokeWidth="3" />
          <path d="M13 6c5 2 6 7 3 14M10 13c3-2 8-1 11 1" stroke="#2f7fc2" strokeWidth="3" />
          <circle cx="12.500" cy="10" r="3" stroke="#3596a0" strokeWidth="2" />
        </svg>
        <Clock>
          <ClockTime>12:02 PM</ClockTime>
          <div>03-Nov-22</div>
        </Clock>
        <svg width={25} height={24} viewBox="0 0 25 24"><path d="M.6.6h23.500v17.900h-7.400l-4 4.200-4-4.200H.6z" fill="none" stroke="#fff" strokeWidth="1.300" /></svg>
        <ShowDesktop />
      </Tray>
    </Taskbar>
  );
}

export default function App() {
  return (
    <Screen>
      <GlobalStyle />
      <Browser />
      <Page>
        <PageBody>
          <SiteHeader>
            <ProgressClip><ProgressRing /></ProgressClip>
            <OutlineButton $w={192} />
            <OutlineButton $w={60} />
          </SiteHeader>
          <Columns>
            <MainColumn>
              <Video />
              <CourseTabs>
                <SearchTab>
                  <svg width={22} height={22} viewBox="0 0 22 22"><circle cx="8" cy="8" r="6.500" fill="none" stroke="#6a6f73" strokeWidth="2.300" /><path d="M13 13l8 8" stroke="#6a6f73" strokeWidth="3" /></svg>
                </SearchTab>
                <CourseTab $ls={0.15} $active>Overview</CourseTab>
                <CourseTab $ls={0.9}>Q&amp;A</CourseTab>
                <CourseTab $ls={0.32}>Notes</CourseTab>
                <CourseTab $ls={0.45}>Announcements</CourseTab>
                <CourseTab $ls={0.36}>Reviews</CourseTab>
                <CourseTab $ls={0.4}>Learning tools</CourseTab>
              </CourseTabs>
              <ScheduleCard>
                <svg width={40} height={40} viewBox="0 0 40 40" fill="none" stroke="#1c1d1f">
                  <circle cx="20" cy="22.500" r="16" strokeWidth="3.600" />
                  <path d="M19.500 12v12l8 5" strokeWidth="2.800" />
                  <path d="M1.500 8.500 10.500 1.500M38.500 8.500 29.500 1.500" strokeWidth="3.800" />
                </svg>
                <ScheduleText>
                  <ScheduleTitle>Schedule learning time</ScheduleTitle>
                  <ScheduleCopy>
                    {'Learning a little each day adds up. Research shows that students who make learning a habit are more likely to\nreach their goals. Set time aside to learn and get reminders using your learning scheduler.'}
                  </ScheduleCopy>
                </ScheduleText>
              </ScheduleCard>
            </MainColumn>
            <CourseSidebar />
          </Columns>
        </PageBody>
        <ScrollTrack>
          <ScrollArrow $h={26}><ScrollChevron up /></ScrollArrow>
          <ScrollThumb $h={171} $top={12} />
          <Grow />
          <ScrollArrow $h={26}><ScrollChevron /></ScrollArrow>
        </ScrollTrack>
      </Page>
      <WindowsTaskbar />
    </Screen>
  );
}
